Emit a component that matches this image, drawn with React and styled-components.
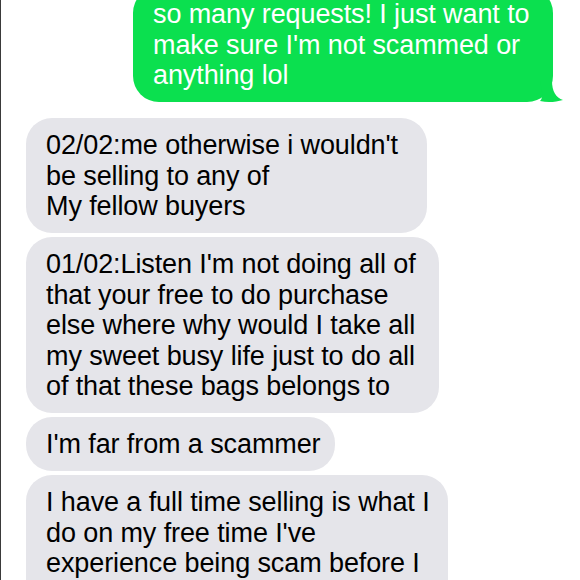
import React from 'react';
import styled, { createGlobalStyle } from 'styled-components';

const GlobalStyle = createGlobalStyle`
  html, body {
    margin: 0;
    padding: 0;
    background: #ffffff;
  }
`;

const Screen = styled.div`
  width: 580px;
  height: 580px;
  overflow: hidden;
  box-sizing: border-box;
  border-left: 1px solid #3a3a3a;
  background: #ffffff;
  font-family: "Liberation Sans", Arial, sans-serif;
`;

const Thread = styled.div`
  display: flex;
  flex-direction: column;
  gap: 4px;
  margin-top: -13px;
  padding: 0 27px 0 25px;
`;

const Bubble = styled.div`
  position: relative;
  align-self: ${props => props.mine ? 'flex-end' : 'flex-start'};
  box-sizing: border-box;
  width: ${props => props.width ? `${props.width}px` : 'auto'};
  margin-bottom: ${props => props.mine ? '12px' : '0'};
  padding: 12px 19px 11.5px 20px;
  border-radius: 26px;
  background: ${props => props.mine ? '#0be04f' : '#e5e5ea'};
  color: ${props => props.mine ? '#ffffff' : '#000000'};
  font-size: 27px;
  line-height: 30.5px;
  letter-spacing: -0.1px;
  white-space: nowrap;
`;

const Tail = styled.svg`
  position: absolute;
  right: -11px;
  bottom: -1px;
  width: 24px;
  height: 22px;
`;

const Line = styled.div``;

const messages = [
  {
    mine: true,
    width: 420,
    lines: [
      'so many requests! I just want to',
      "make sure I'm not scammed or",
      'anything lol',
    ],
  },
  {
    width: 401,
    lines: [
      "02/02:me otherwise i wouldn't",
      'be selling to any of',
      'My fellow buyers',
    ],
  },
  {
    width: 413,
    lines: [
      "01/02:Listen I'm not doing all of",
      'that your free to do purchase',
      'else where why would I take all',
      'my sweet busy life just to do all',
      'of that these bags belongs to',
    ],
  },
  {
    width: 309,
    lines: ["I'm far from a scammer"],
  },
  {
    width: 422,
    lines: [
      'I have a full time selling is what I',
      "do on my free time I've",
      'experience being scam before I',
      'know how it feels',
    ],
  },
];

const App = () => {
  return (
    <Screen>
      <GlobalStyle />
      <Thread>
        {messages.map((msg, i) => (
          <Bubble key={i} mine={msg.mine} width={msg.width}>
            {msg.lines.map((line, j) => (
              <Line key={j}>{line}</Line>
            ))}
            {msg.mine && (
              <Tail viewBox="0 0 24 22">
                <path d="M0 0 C2 10 4 16 0 20 C8 22 16 21 23 19 C16 17 12 10 12 0 Z" fill="#0be04f" />
              </Tail>
            )}
          </Bubble>
        ))}
      </Thread>
    </Screen>
  );
};

export default App;
